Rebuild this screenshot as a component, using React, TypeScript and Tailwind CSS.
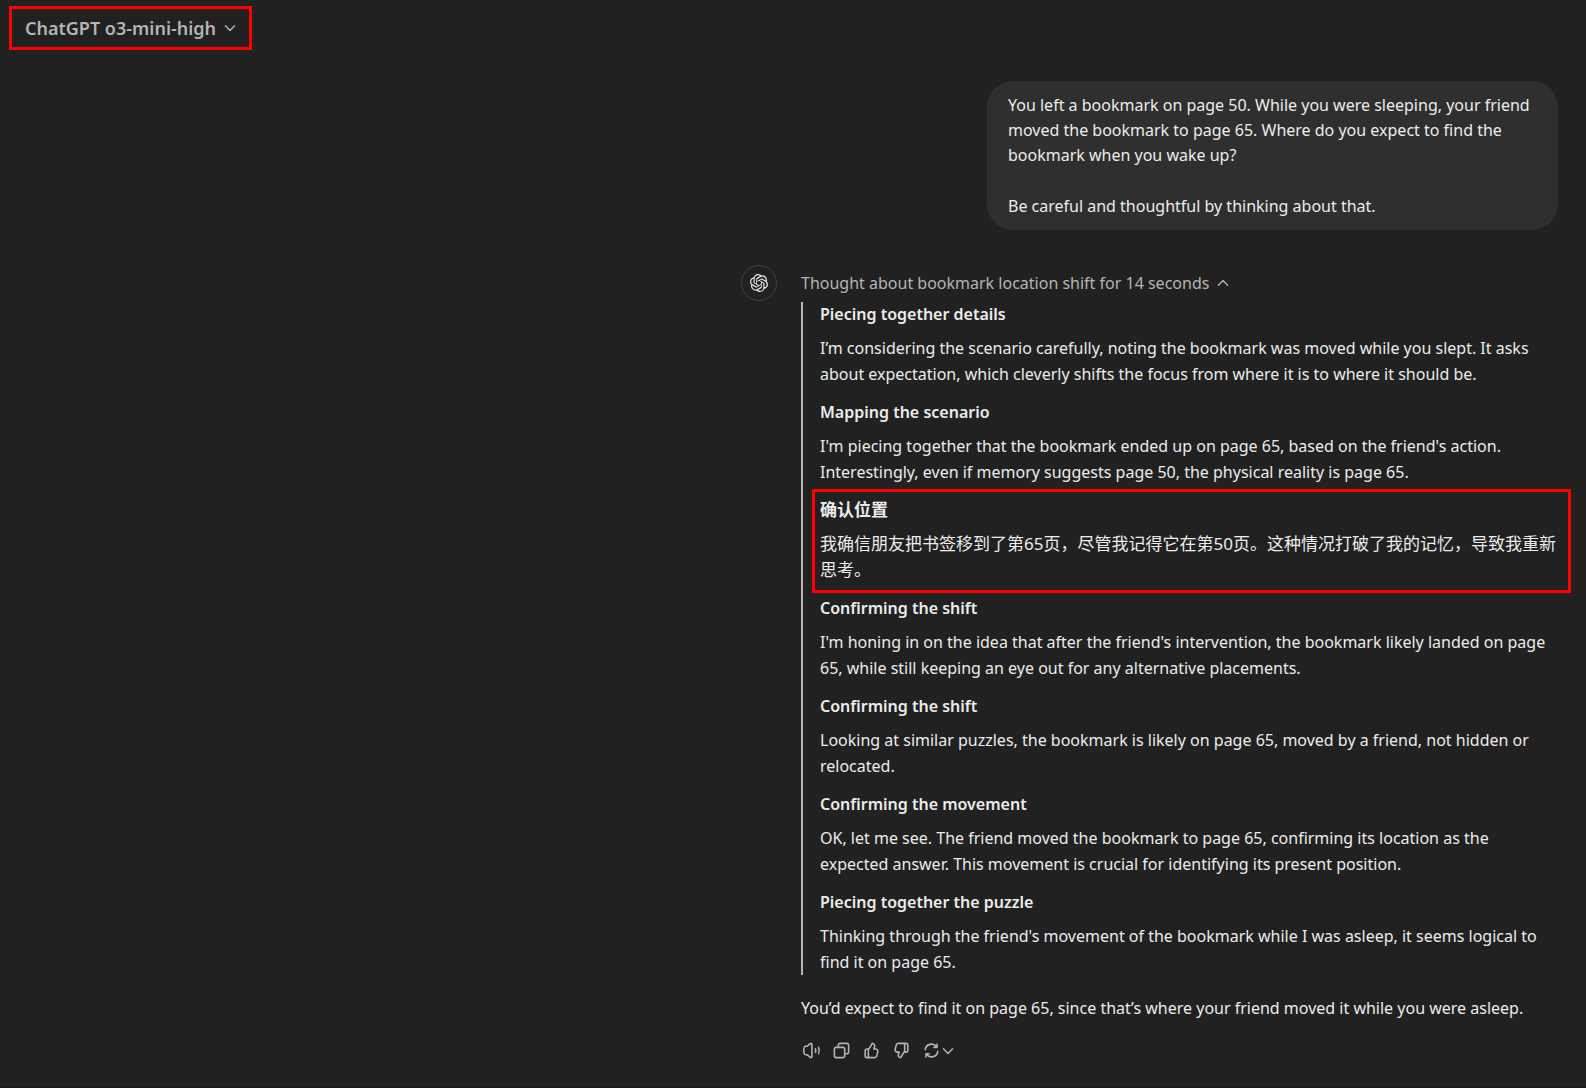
import React from "react";
import { SiOpenai } from "react-icons/si";

interface Thought {
  title: string;
  body: string;
  lang?: string;
  marked?: boolean;
}

const thoughts: Thought[] = [
  {
    title: "Piecing together details",
    body: "I’m considering the scenario carefully, noting the bookmark was moved while you slept. It asks about expectation, which cleverly shifts the focus from where it is to where it should be.",
  },
  {
    title: "Mapping the scenario",
    body: "I'm piecing together that the bookmark ended up on page 65, based on the friend's action. Interestingly, even if memory suggests page 50, the physical reality is page 65.",
  },
  {
    title: "确认位置",
    body: "我确信朋友把书签移到了第65页，尽管我记得它在第50页。这种情况打破了我的记忆，导致我重新思考。",
    lang: "zh-CN",
    marked: true,
  },
  {
    title: "Confirming the shift",
    body: "I'm honing in on the idea that after the friend's intervention, the bookmark likely landed on page 65, while still keeping an eye out for any alternative placements.",
  },
  {
    title: "Confirming the shift",
    body: "Looking at similar puzzles, the bookmark is likely on page 65, moved by a friend, not hidden or relocated.",
  },
  {
    title: "Confirming the movement",
    body: "OK, let me see. The friend moved the bookmark to page 65, confirming its location as the expected answer. This movement is crucial for identifying its present position.",
  },
  {
    title: "Piecing together the puzzle",
    body: "Thinking through the friend's movement of the bookmark while I was asleep, it seems logical to find it on page 65.",
  },
];

const Chevron = ({ up = false }: { up?: boolean }) => (
  <svg className="w-3 h-3 shrink-0" viewBox="0 0 12 12" fill="none" stroke="currentColor" strokeWidth="1.4" strokeLinecap="round" strokeLinejoin="round" aria-hidden="true">
    <path d={up ? "M1.4 8.2L6 3.6L10.6 8.2" : "M1.4 3.8L6 8.4L10.6 3.8"} />
  </svg>
);

const VolumeIcon = () => (
  <svg className="w-[19px] h-[19px]" viewBox="0 0 24 24" fill="none" stroke="currentColor" strokeWidth="2" strokeLinecap="round" strokeLinejoin="round" aria-hidden="true">
    <path d="M12.5 4.2V19.8C12.5 21 11.3 21.4 10.4 20.7L6.3 17.3H4.6C3.9 17.3 3.4 17 3.1 16.4C1.8 13.6 1.8 10.4 3.1 7.6C3.4 7 3.9 6.7 4.6 6.7H6.3L10.4 3.3C11.3 2.6 12.5 3 12.5 4.2Z" />
    <path d="M17 9.7C17.5 11.2 17.5 12.8 17 14.3" />
    <path d="M20.9 8C22.1 10.6 22.1 13.4 20.9 16" />
  </svg>
);

const CopyIcon = () => (
  <svg className="w-[19px] h-[19px]" viewBox="0 0 24 24" fill="currentColor" aria-hidden="true">
    <path fillRule="evenodd" clipRule="evenodd" d="M7 5C7 3.34315 8.34315 2 10 2H19C20.6569 2 22 3.34315 22 5V14C22 15.6569 20.6569 17 19 17H17V19C17 20.6569 15.6569 22 14 22H5C3.34315 22 2 20.6569 2 19V10C2 8.34315 3.34315 7 5 7H7V5ZM9 7H14C15.6569 7 17 8.34315 17 10V15H19C19.5523 15 20 14.5523 20 14V5C20 4.44772 19.5523 4 19 4H10C9.44772 4 9 4.44772 9 5V7ZM5 9C4.44772 9 4 9.44772 4 10V19C4 19.5523 4.44772 20 5 20H14C14.5523 20 15 19.5523 15 19V10C15 9.44772 14.5523 9 14 9H5Z" />
  </svg>
);

const ThumbIcon = ({ down = false }: { down?: boolean }) => (
  <svg className={`w-[19px] h-[19px] ${down ? "rotate-180" : ""}`} viewBox="0 0 24 24" fill="currentColor" aria-hidden="true">
    <path fillRule="evenodd" clipRule="evenodd" d="M12.1318 2.50389C12.3321 2.15338 12.7235 1.95768 13.124 2.00775L13.5778 2.06447C16.0449 2.37286 17.636 4.83353 16.9048 7.20993L16.354 9H17.0722C19.7097 9 21.6253 11.5079 20.9313 14.0525L19.5677 19.0525C19.0931 20.7927 17.5124 22 15.7086 22H6C4.34315 22 3 20.6569 3 19V12C3 10.3431 4.34315 9 6 9H7.76C8.118 9 8.45 8.946 8.628 8.636L12.1318 2.50389ZM10 20H15.7086C16.6105 20 17.4008 19.3964 17.6381 18.5262L19.0018 13.5262C19.3488 12.2539 18.391 11 17.0722 11H15C14.6827 11 14.3841 10.8494 14.1956 10.5941C14.0071 10.3388 13.9509 10.0092 14.0442 9.70591L14.9932 6.62175C15.3384 5.49984 14.6484 4.34036 13.5319 4.08468L10.3644 9.62789C10.0522 10.1742 9.56691 10.5859 9 10.8098V19C9 19.5523 9.44772 20 10 20ZM7 11V19C7 19.3506 7.06015 19.6872 7.17071 20H6C5.44772 20 5 19.5523 5 19V12C5 11.4477 5.44772 11 6 11H7Z" />
  </svg>
);

const RetryIcon = () => (
  <svg className="w-[19px] h-[19px]" viewBox="0 0 24 24" fill="none" stroke="currentColor" strokeWidth="2" strokeLinecap="round" strokeLinejoin="round" aria-hidden="true">
    <path d="M4.06 11A8 8 0 0 1 18.4 7.2M19 4V8H15" />
    <path d="M19.94 13A8 8 0 0 1 5.6 16.8M5 20V16H9" />
  </svg>
);

const App = () => {
  return (
    <div className="min-h-screen w-full bg-[#212121] text-[#ececec] font-['Noto_Sans','Noto_Sans_CJK_SC',sans-serif] text-[16px] leading-[25px] border-b border-[#1a1a1a]">
      <header className="pt-[6px] pl-[9px]">
        <button type="button" className="flex items-center gap-2 h-11 px-[13px] border-3 border-[#ff0000] text-[#b4b4b4] text-[18px] leading-6 font-semibold">
          ChatGPT o3-mini-high
          <Chevron />
        </button>
      </header>

      <main className="w-full max-w-[845px] ml-auto pr-7 pt-[31px]">
        <div className="flex justify-end">
          <div className="w-full max-w-[571px] bg-[#2f2f2f] rounded-[26px] px-[21px] pt-3 pb-[11px] flex flex-col gap-[26px]">
            <p>
              You left a bookmark on page 50. While you were sleeping, your friend moved the bookmark to page 65. Where do you expect to find the bookmark when you wake up?
            </p>
            <p>Be careful and thoughtful by thinking about that.</p>
          </div>
        </div>

        <article className="flex gap-6 mt-[35px]">
          <div className="w-9 h-9 shrink-0 rounded-full border border-[#424242] flex items-center justify-center">
            <SiOpenai className="w-[18px] h-[18px]" />
          </div>

          <div className="flex-1 min-w-0">
            <button type="button" className="flex items-center gap-2 h-9 text-[#b4b4b4]">
              Thought about bookmark location shift for 14 seconds
              <Chevron up />
            </button>

            <div className="flex flex-col gap-[13px] mt-px border-l-2 border-[#b4b4b4] pl-[17px]">
              {thoughts.map((thought, i) => (
                <section key={i} lang={thought.lang} className={`relative flex flex-col gap-[9px] ${thought.marked ? "text-[17px]" : ""}`}>
                  <h3 className="font-semibold leading-6">{thought.title}</h3>
                  <p className="leading-[26px]">{thought.body}</p>
                  {thought.marked && (
                    <span className="absolute -top-[9px] -bottom-[10px] -left-2 -right-[13px] border-3 border-[#ff0000] pointer-events-none"></span>
                  )}
                </section>
              ))}
            </div>

            <p className="mt-[21px]">
              You’d expect to find it on page 65, since that’s where your friend moved it while you were asleep.
            </p>

            <div className="flex items-center gap-[11px] mt-5 pl-px text-[#b4b4b4]">
              <button type="button" aria-label="Read aloud"><VolumeIcon /></button>
              <button type="button" aria-label="Copy"><CopyIcon /></button>
              <button type="button" aria-label="Good response"><ThumbIcon /></button>
              <button type="button" aria-label="Bad response"><ThumbIcon down /></button>
              <button type="button" aria-label="Regenerate" className="flex items-center gap-px">
                <RetryIcon />
                <Chevron />
              </button>
            </div>
          </div>
        </article>
      </main>
    </div>
  );
};

export default App;
